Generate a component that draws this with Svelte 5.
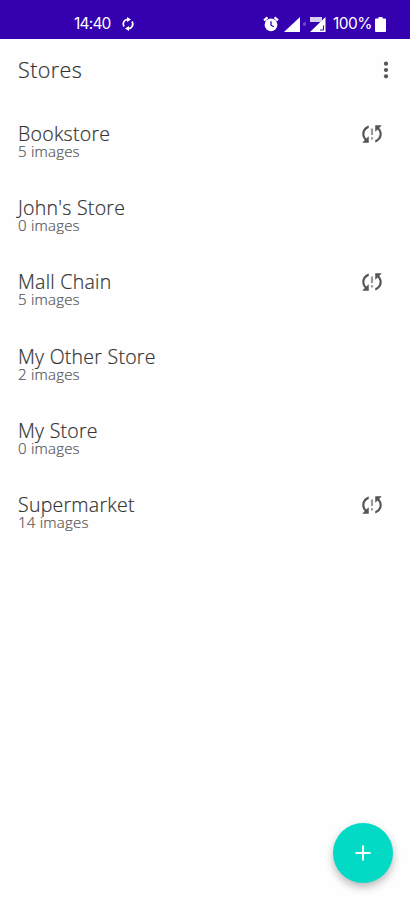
<script lang="ts">
  interface Store {
    name: string;
    images: number;
    unsynced?: boolean;
  }

  const stores: Store[] = [
    { name: 'Bookstore', images: 5, unsynced: true },
    { name: "John's Store", images: 0 },
    { name: 'Mall Chain', images: 5, unsynced: true },
    { name: 'My Other Store', images: 2 },
    { name: 'My Store', images: 0 },
    { name: 'Supermarket', images: 14, unsynced: true }
  ];
</script>

<div class="screen">
  <div class="status-bar">
    <span class="clock">14:40</span>
    <svg class="sync" viewBox="0 0 14 14" width="14" height="14">
      <path d="M3 9.6A4.7 4.7 0 0 1 6.6 2.3M11 4.4A4.7 4.7 0 0 1 7.4 11.7" />
      <path class="fill" d="M6 0l4 2.4L6 5zM8 9v5l-4-2.4z" />
    </svg>
    <div class="indicators">
      <svg class="alarm" viewBox="0 0 16 16" width="16" height="16">
        <circle cx="8" cy="8.8" r="6.4" fill="#fff" />
        <path d="M1 4.3L4.5 1.3M15 4.3L11.5 1.3" stroke="#fff" stroke-width="2.2" />
        <path d="M8 5.2v4l2.8 1.6" stroke="#3500b0" stroke-width="1.3" fill="none" />
      </svg>
      <svg class="signal" viewBox="0 0 16 15" width="16" height="15">
        <path d="M16 0v15H0z" fill="#fff" />
      </svg>
      <i class="dot"></i>
      <svg class="roaming" viewBox="0 0 16 15" width="16" height="15">
        <path d="M15.5 0v15H0z" fill="#fff" />
        <path d="M0 0h12v5H0z" fill="#d9cdf4" />
        <path d="M13.500 8.500v4.500h-3.500" stroke="#3500b0" stroke-width="1" fill="none" />
      </svg>
      <span class="percent">100%</span>
      <svg class="battery" viewBox="0 0 11 15" width="11" height="15">
        <path d="M3.5 0h4v1.5H10q1 0 1 1V14q0 1-1 1H1q-1 0-1-1V2.5q0-1 1-1h2.5z" fill="#fff" />
      </svg>
    </div>
  </div>

  <header>
    <h1>Stores</h1>
    <button class="more" aria-label="More options">
      <svg viewBox="0 0 6 18" width="6" height="18">
        <circle cx="3" cy="2.7" r="2.1" />
        <circle cx="3" cy="9" r="2.1" />
        <circle cx="3" cy="15.3" r="2.1" />
      </svg>
    </button>
  </header>

  <ul>
    {#each stores as store}
      <li>
        <div class="info">
          <span class="name">{store.name}</span>
          <span class="count">{store.images} images</span>
        </div>
        {#if store.unsynced}
          <svg class="problem" viewBox="0 0 24 24" width="26" height="26">
            <path d="M3 12c0 2.21.91 4.2 2.36 5.64L3 20h6v-6l-2.24 2.24C5.68 15.15 5 13.66 5 12c0-2.61 1.67-4.83 4-5.65V4.26C5.55 5.15 3 8.27 3 12zM21 4h-6v6l2.24-2.24C18.32 8.85 19 10.34 19 12c0 2.61-1.67 4.83-4 5.65v2.09c3.45-.89 6-4.01 6-7.74 0-2.21-.91-4.2-2.36-5.64L21 4z" />
            <path class="mark" d="M11 17h2v-2h-2v2zM11 13h2V7h-2v6z" />
          </svg>
        {/if}
      </li>
    {/each}
  </ul>

  <button class="fab" aria-label="Add store">
    <svg viewBox="0 0 16 16" width="16" height="16">
      <path d="M8 .5v15M.5 8h15" stroke="#fff" stroke-width="2" />
    </svg>
  </button>
</div>

<style>
  .screen {
    position: relative;
    box-sizing: border-box;
    height: 900px;
    background: #fefefe;
    font-family: 'Open Sans', sans-serif;
    font-weight: 300;
    color: #333;
    -webkit-text-stroke: 0.2px currentColor;
    overflow: hidden;
  }

  .status-bar {
    display: flex;
    align-items: center;
    box-sizing: border-box;
    height: 39px;
    padding: 9px 24px 0 74px;
    background: #3500b0;
    color: #fff;
    font-family: Inter, sans-serif;
    font-size: 15.5px;
    font-weight: 400;
    line-height: 20px;
    -webkit-text-stroke: 0;
  }

  .clock {
    width: 38px;
    letter-spacing: -0.8px;
    white-space: nowrap;
  }

  .sync {
    margin-left: 9px;
    fill: none;
    stroke: #fff;
    stroke-width: 1.8;
  }

  .sync .fill {
    fill: #fff;
    stroke: none;
  }

  .indicators {
    display: flex;
    align-items: center;
    margin-left: auto;
  }

  .signal {
    margin-left: 5px;
  }

  .dot {
    width: 3px;
    height: 4px;
    margin: 0 4px 0 3px;
    border-radius: 2px;
    background: #6d48c8;
  }

  .percent {
    margin-left: 7px;
    width: 39px;
    letter-spacing: -0.5px;
    white-space: nowrap;
  }

  .battery {
    margin-left: 3px;
  }

  header {
    display: flex;
    align-items: center;
    justify-content: space-between;
    height: 62px;
    padding: 0 21px 0 18px;
  }

  h1 {
    margin: 0 0 2px;
    font-size: 21.5px;
    font-weight: inherit;
    letter-spacing: 0.4px;
  }

  button {
    padding: 0;
    border: none;
    background: none;
  }

  .more {
    display: flex;
    fill: #555;
  }

  ul {
    margin: 0;
    padding: 0;
    list-style: none;
  }

  li {
    display: flex;
    align-items: flex-start;
    justify-content: space-between;
    box-sizing: border-box;
    height: 74.2px;
    padding: 20px 25px 0 18px;
  }

  .info {
    display: flex;
    flex-direction: column;
    padding-top: 4px;
  }

  .name {
    font-size: 19.5px;
    line-height: 18px;
    letter-spacing: 0.26px;
  }

  .count {
    font-size: 15px;
    line-height: 16px;
    letter-spacing: 0.22px;
    color: #555;
  }

  .problem {
    fill: #555;
  }

  .mark {
    fill: #999;
  }

  .fab {
    position: absolute;
    top: 823px;
    left: 333px;
    display: flex;
    align-items: center;
    justify-content: center;
    width: 60px;
    height: 60px;
    border-radius: 50%;
    background: #03dac5;
    box-shadow: 0 4px 8px rgba(0, 0, 0, 0.28);
  }
</style>
